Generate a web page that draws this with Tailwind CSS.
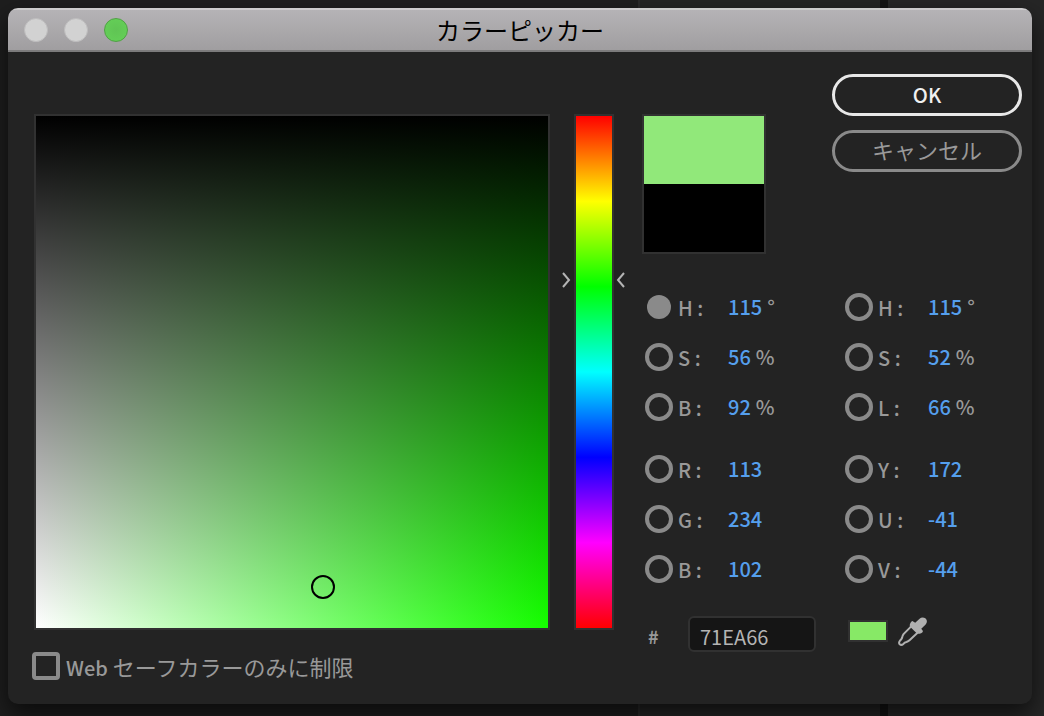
<!DOCTYPE html>
<html lang="ja">
<head>
<meta charset="utf-8">
<title>カラーピッカー</title>
<script src="https://cdn.jsdelivr.net/npm/@tailwindcss/browser@4"></script>
</head>
<body class="relative isolate flex min-h-screen overflow-hidden bg-[#1d1d1d] pt-2 pr-3 pb-3 pl-2 font-['Noto_Sans_CJK_JP',sans-serif] text-xl text-[#999]">
  <!-- Application panels behind the dialog -->
  <div class="absolute inset-0 -z-10 flex" aria-hidden="true">
    <div class="w-[638px] bg-[#1e1e1e]"></div>
    <div class="w-[242px] border-l-2 border-[#2a2a2a] bg-[#242424]"></div>
    <div class="w-2 bg-[#131313]"></div>
    <div class="flex-1 bg-[#262626]"></div>
  </div>

  <main class="flex flex-1 flex-col overflow-hidden rounded-[10px] bg-[#232323] shadow-[0_10px_24px_rgba(0,0,0,0.65)]">
    <header class="grid h-11 grid-cols-[1fr_auto_1fr] items-center border-t-2 border-b-2 border-t-[#cbcacb] border-b-[#7c7b7c] bg-linear-to-b from-[#b5b3b6] to-[#a09ea0] px-4">
      <div class="flex items-center gap-4">
        <button type="button" aria-label="閉じる" class="size-6 rounded-full border border-[#bdbcbd] bg-[#d2d2d2]"></button>
        <button type="button" aria-label="最小化" class="size-6 rounded-full border border-[#bdbcbd] bg-[#d2d2d2]"></button>
        <button type="button" aria-label="拡大" class="size-6 rounded-full border border-[#4fa244] bg-radial from-[#60c454] to-[#65d158]"></button>
      </div>
      <h1 class="text-2xl leading-8 text-black">カラーピッカー</h1>
    </header>

    <form class="grid grid-cols-[minmax(0,1fr)_40px_408px] pt-[22px] pr-[10px] pl-[26px]">
      <section class="mr-6 pt-10">
        <div class="relative aspect-square border-2 border-[#313131] bg-[linear-gradient(to_bottom,black,transparent),linear-gradient(to_right,white,#15ff00)] bg-origin-padding">
          <span class="absolute top-[92%] left-[56%] size-6 -translate-1/2 rounded-full border-2 border-black"></span>
        </div>
        <label class="mt-5 -ml-0.5 flex items-center gap-1.5 text-[22px] leading-8">
          <input type="checkbox" class="size-7 appearance-none rounded-sm border-4 border-[#8a8a8a] checked:bg-[#8a8a8a]">
          <span><span class="text-xl font-medium">Web</span> セーフカラーのみに制限</span>
        </label>
      </section>

      <section class="pt-10">
        <div class="relative h-[516px] border-2 border-[#313131] bg-[linear-gradient(to_bottom,#f00,#ff0,#0f0,#0ff,#00f,#f0f,#f00)] bg-origin-padding">
          <svg class="absolute top-[32%] right-full mr-1 h-4 w-2.5 -translate-y-1/2" viewBox="0 0 10 16" fill="none" stroke="#b4b4b4" stroke-width="2"><path d="M1 1L7 8L1 15"/></svg>
          <svg class="absolute top-[32%] left-full ml-1 h-4 w-2.5 -translate-y-1/2" viewBox="0 0 10 16" fill="none" stroke="#b4b4b4" stroke-width="2"><path d="M8 1L2 8L8 15"/></svg>
        </div>
      </section>

      <section class="ml-7">
        <div class="flex justify-between">
          <div class="mt-10 h-[140px] w-[124px] border-2 border-[#313131]">
            <div class="h-1/2 bg-[#91e87a]"></div>
            <div class="h-1/2 bg-black"></div>
          </div>
          <div class="flex w-[190px] flex-col gap-3.5">
            <button type="button" class="h-[42px] rounded-full border-3 border-[#e8e8e8] text-xl leading-8 font-medium text-[#f0f0f0]">OK</button>
            <button type="button" class="h-[42px] rounded-full border-3 border-[#8a8a8a] pb-1 text-[22px] leading-8">キャンセル</button>
          </div>
        </div>

        <div class="mt-7 grid grid-cols-[200px_180px] gap-y-3">
          <div>
            <div class="flex h-[50px] items-center pl-[3px]"><label class="flex w-[83px] items-center gap-[5px]"><input type="radio" name="channel" checked class="size-7 appearance-none rounded-full border-4 border-[#8a8a8a] checked:border-2 checked:border-transparent checked:bg-[#8a8a8a] checked:bg-clip-padding"><span class="pt-0.5 font-medium">H :</span></label><input aria-label="HSB H" value="115" class="field-sizing-content font-medium text-[#559fed]"><span class="pl-[5px] font-medium">°</span></div>
            <div class="flex h-[50px] items-center pl-[3px]"><label class="flex w-[83px] items-center gap-[5px]"><input type="radio" name="channel" class="size-7 appearance-none rounded-full border-4 border-[#8a8a8a]"><span class="pt-0.5 font-medium">S :</span></label><input aria-label="HSB S" value="56" class="field-sizing-content font-medium text-[#559fed]"><span class="pl-[5px] font-medium">%</span></div>
            <div class="flex h-[50px] items-center pl-[3px]"><label class="flex w-[83px] items-center gap-[5px]"><input type="radio" name="channel" class="size-7 appearance-none rounded-full border-4 border-[#8a8a8a]"><span class="pt-0.5 font-medium">B :</span></label><input aria-label="HSB B" value="92" class="field-sizing-content font-medium text-[#559fed]"><span class="pl-[5px] font-medium">%</span></div>
          </div>
          <div>
            <div class="flex h-[50px] items-center pl-[3px]"><label class="flex w-[83px] items-center gap-[5px]"><input type="radio" name="channel" class="size-7 appearance-none rounded-full border-4 border-[#8a8a8a]"><span class="pt-0.5 font-medium">H :</span></label><input aria-label="HSL H" value="115" class="field-sizing-content font-medium text-[#559fed]"><span class="pl-[5px] font-medium">°</span></div>
            <div class="flex h-[50px] items-center pl-[3px]"><label class="flex w-[83px] items-center gap-[5px]"><input type="radio" name="channel" class="size-7 appearance-none rounded-full border-4 border-[#8a8a8a]"><span class="pt-0.5 font-medium">S :</span></label><input aria-label="HSL S" value="52" class="field-sizing-content font-medium text-[#559fed]"><span class="pl-[5px] font-medium">%</span></div>
            <div class="flex h-[50px] items-center pl-[3px]"><label class="flex w-[83px] items-center gap-[5px]"><input type="radio" name="channel" class="size-7 appearance-none rounded-full border-4 border-[#8a8a8a]"><span class="pt-0.5 font-medium">L :</span></label><input aria-label="HSL L" value="66" class="field-sizing-content font-medium text-[#559fed]"><span class="pl-[5px] font-medium">%</span></div>
          </div>
          <div>
            <div class="flex h-[50px] items-center pl-[3px]"><label class="flex w-[83px] items-center gap-[5px]"><input type="radio" name="channel" class="size-7 appearance-none rounded-full border-4 border-[#8a8a8a]"><span class="pt-0.5 font-medium">R :</span></label><input aria-label="RGB R" value="113" class="field-sizing-content font-medium text-[#559fed]"></div>
            <div class="flex h-[50px] items-center pl-[3px]"><label class="flex w-[83px] items-center gap-[5px]"><input type="radio" name="channel" class="size-7 appearance-none rounded-full border-4 border-[#8a8a8a]"><span class="pt-0.5 font-medium">G :</span></label><input aria-label="RGB G" value="234" class="field-sizing-content font-medium text-[#559fed]"></div>
            <div class="flex h-[50px] items-center pl-[3px]"><label class="flex w-[83px] items-center gap-[5px]"><input type="radio" name="channel" class="size-7 appearance-none rounded-full border-4 border-[#8a8a8a]"><span class="pt-0.5 font-medium">B :</span></label><input aria-label="RGB B" value="102" class="field-sizing-content font-medium text-[#559fed]"></div>
          </div>
          <div>
            <div class="flex h-[50px] items-center pl-[3px]"><label class="flex w-[83px] items-center gap-[5px]"><input type="radio" name="channel" class="size-7 appearance-none rounded-full border-4 border-[#8a8a8a]"><span class="pt-0.5 font-medium">Y :</span></label><input aria-label="YUV Y" value="172" class="field-sizing-content font-medium text-[#559fed]"></div>
            <div class="flex h-[50px] items-center pl-[3px]"><label class="flex w-[83px] items-center gap-[5px]"><input type="radio" name="channel" class="size-7 appearance-none rounded-full border-4 border-[#8a8a8a]"><span class="pt-0.5 font-medium">U :</span></label><input aria-label="YUV U" value="-41" class="field-sizing-content font-medium text-[#559fed]"></div>
            <div class="flex h-[50px] items-center pl-[3px]"><label class="flex w-[83px] items-center gap-[5px]"><input type="radio" name="channel" class="size-7 appearance-none rounded-full border-4 border-[#8a8a8a]"><span class="pt-0.5 font-medium">V :</span></label><input aria-label="YUV V" value="-44" class="field-sizing-content font-medium text-[#559fed]"></div>
          </div>
        </div>

        <div class="mt-[22px] flex h-9 items-center pl-1.5">
          <label for="hex" class="w-10 pt-1 text-lg font-bold">#</label>
          <input id="hex" value="71EA66" class="h-9 w-32 rounded-md border-2 border-[#313131] bg-[#151515] pt-1 pl-2.5 text-[#b4b4b4]">
          <span class="mb-1.5 ml-8 h-[22px] w-10 border-2 border-[#313131] bg-[#87e966]"></span>
          <button type="button" aria-label="スポイト" class="mb-1.5 ml-2.5">
            <svg class="size-[29px]" viewBox="0 0 86 86">
              <path fill="#b0b0b0" d="M45 13L51 17L64 5C69 0 76 0 81 4C87 9 87 17 82 22L69 35L73 40Q75 43 72 46Q69 49 64 50L57 50L35 28L35 22Q37 16 40 13Q43 11 45 13Z"/>
              <path fill="none" stroke="#b0b0b0" stroke-width="6" stroke-linejoin="round" d="M40 27L17 50Q13 55 12 62Q10 67 6 70Q1 76 5 81Q10 85 16 80Q20 75 25 74Q31 72 35 68L58 47"/>
            </svg>
          </button>
        </div>
      </section>
    </form>
  </main>
</body>
</html>
